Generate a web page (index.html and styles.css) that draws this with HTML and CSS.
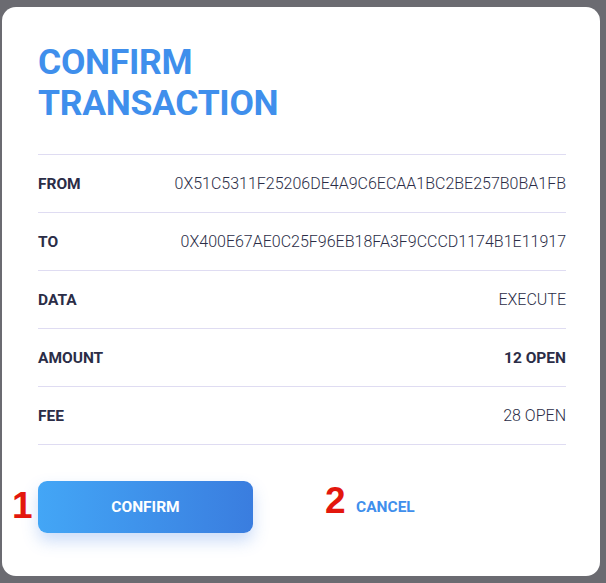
FILE: index.html
```html
<!DOCTYPE html>
<html>
<head>
<meta charset="utf-8">
<link rel="stylesheet" href="styles.css">
</head>
<body>
<div class="modal">
  <h1 class="title">CONFIRM<br>TRANSACTION</h1>
  <div class="rows">
    <div class="row"><span class="label">FROM</span><span class="value">0X51C5311F25206DE4A9C6ECAA1BC2BE257B0BA1FB</span></div>
    <div class="row"><span class="label">TO</span><span class="value">0X400E67AE0C25F96EB18FA3F9CCCD1174B1E11917</span></div>
    <div class="row"><span class="label">DATA</span><span class="value">EXECUTE</span></div>
    <div class="row"><span class="label">AMOUNT</span><span class="value strong">12 OPEN</span></div>
    <div class="row"><span class="label">FEE</span><span class="value">28 OPEN</span></div>
  </div>
  <div class="actions">
    <button class="btn-confirm"><span class="marker m1">1</span>CONFIRM</button>
    <a class="btn-cancel"><span class="marker m2">2</span>CANCEL</a>
  </div>
</div>
</body>
</html>
```

FILE: styles.css
```css
html, body {
  margin: 0;
  padding: 0;
  background: #6b6b71;
  height: 583px;
  overflow: hidden;
}
body {
  font-family: Roboto, "Liberation Sans", sans-serif;
}
.modal {
  box-sizing: border-box;
  margin: 7px 0 0 2px;
  width: 598px;
  height: 569px;
  background: #fff;
  border-radius: 14px;
  padding: 35px 34px 0 36px;
}
.title {
  margin: 0;
  font-size: 35.5px;
  line-height: 41px;
  font-weight: 700;
  color: #3f8fec;
  letter-spacing: -0.3px;
}
.rows {
  margin-top: 30px;
  border-top: 1px solid #dfdcf2;
}
.row {
  display: flex;
  justify-content: space-between;
  align-items: center;
  height: 57px;
  border-bottom: 1px solid #dfdcf2;
  color: #2b2d47;
}
.label {
  font-weight: 700;
  font-size: 15.5px;
}
.value {
  font-weight: 300;
  font-size: 16px;
}
.value.strong {
  font-weight: 700;
  font-size: 15.5px;
}
.actions {
  display: flex;
  align-items: center;
  margin-top: 36px;
}
.btn-confirm {
  position: relative;
  width: 215px;
  height: 52px;
  border: 0;
  border-radius: 9px;
  background: linear-gradient(90deg, #43a6f6 0%, #3a7ddf 100%);
  color: #fff;
  font-family: Roboto, "Liberation Sans", sans-serif;
  font-weight: 700;
  font-size: 15.5px;
  box-shadow: 0 8px 16px rgba(70, 130, 230, 0.28);
}
.btn-cancel {
  position: relative;
  margin-left: 103px;
  color: #3f8fec;
  font-weight: 700;
  font-size: 15.5px;
}
.marker {
  position: absolute;
  color: #e3170d;
  font-family: "Liberation Sans", Arial, sans-serif;
  font-weight: 700;
  font-size: 37px;
  line-height: 1;
}
.m1 {
  left: -26px;
  top: 6px;
}
.m2 {
  left: -31px;
  top: -16px;
}
```
